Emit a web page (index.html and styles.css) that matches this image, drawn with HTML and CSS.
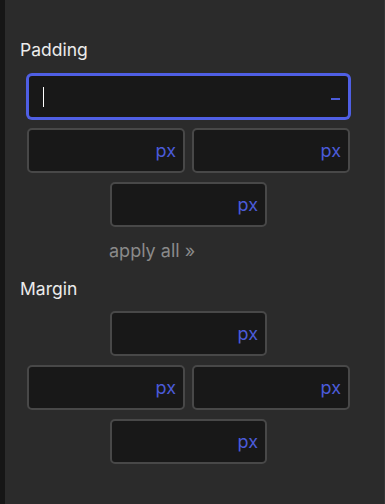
FILE: index.html
```html
<!DOCTYPE html>
<html lang="en">
  <head>
    <meta charset="UTF-8" />
    <title>Spacing</title>
    <link rel="stylesheet" href="styles.css">
  </head>

  <body>
    <div class="app">
      <div class="rail"></div>

      <main class="panel">
        <h2 class="label">Padding</h2>

        <div class="fields">
          <div class="field field-all active">
            <span class="caret"></span>
            <span class="dash"></span>
          </div>
          <div class="pair">
            <div class="field"><span class="unit">px</span></div>
            <div class="field"><span class="unit">px</span></div>
          </div>
          <div class="field field-mid"><span class="unit">px</span></div>
        </div>

        <p class="apply">apply all &raquo;</p>

        <h2 class="label label-margin">Margin</h2>

        <div class="fields">
          <div class="field field-mid"><span class="unit">px</span></div>
          <div class="pair">
            <div class="field"><span class="unit">px</span></div>
            <div class="field"><span class="unit">px</span></div>
          </div>
          <div class="field field-mid"><span class="unit">px</span></div>
        </div>
      </main>
    </div>
  </body>
</html>
```

FILE: styles.css
```css
body {
  margin: 0;
  background-color: #2b2b2b;
  font-family: Inter, "Noto Sans", sans-serif;
  color: #e6e6e6;
}

.app {
  display: flex;
  min-height: 504px;
}

.rail {
  width: 5px;
  background-color: #161616;
}

.panel {
  flex: 1;
  padding: 40px 0 0 15px;
  border-right: 1px solid #353535;
}

.label {
  margin: 0 0 14px 0;
  font-size: 17.5px;
  font-weight: 400;
  line-height: 20px;
  color: #ececec;
}

.label-margin {
  margin-top: 18px;
  margin-bottom: 12px;
}

.fields {
  display: flex;
  flex-direction: column;
  gap: 9px;
  width: 323px;
  margin-left: 7px;
}

.pair {
  display: grid;
  grid-template-columns: 1fr 1fr;
  gap: 7px;
}

.field {
  box-sizing: border-box;
  height: 45px;
  display: flex;
  align-items: center;
  justify-content: flex-end;
  padding: 0 7px;
  background-color: #181818;
  border: 2px solid #484848;
  border-radius: 5px;
}

.field-mid {
  width: 157px;
  margin: 0 auto;
}

.field.active {
  border-color: #4f5fe4;
  box-shadow: 0 0 0 1px #4f5fe4;
  justify-content: space-between;
  padding: 0 8px 0 14px;
}

.caret {
  width: 1px;
  height: 20px;
  background-color: #ffffff;
}

.dash {
  width: 9px;
  height: 2px;
  margin-top: 5px;
  background-color: #4b5bd9;
}

.unit {
  font-size: 18px;
  color: #4b5bd9;
}

.apply {
  margin: 14px 0 0 89px;
  font-size: 18px;
  line-height: 20px;
  color: #8a8a8a;
}
```
